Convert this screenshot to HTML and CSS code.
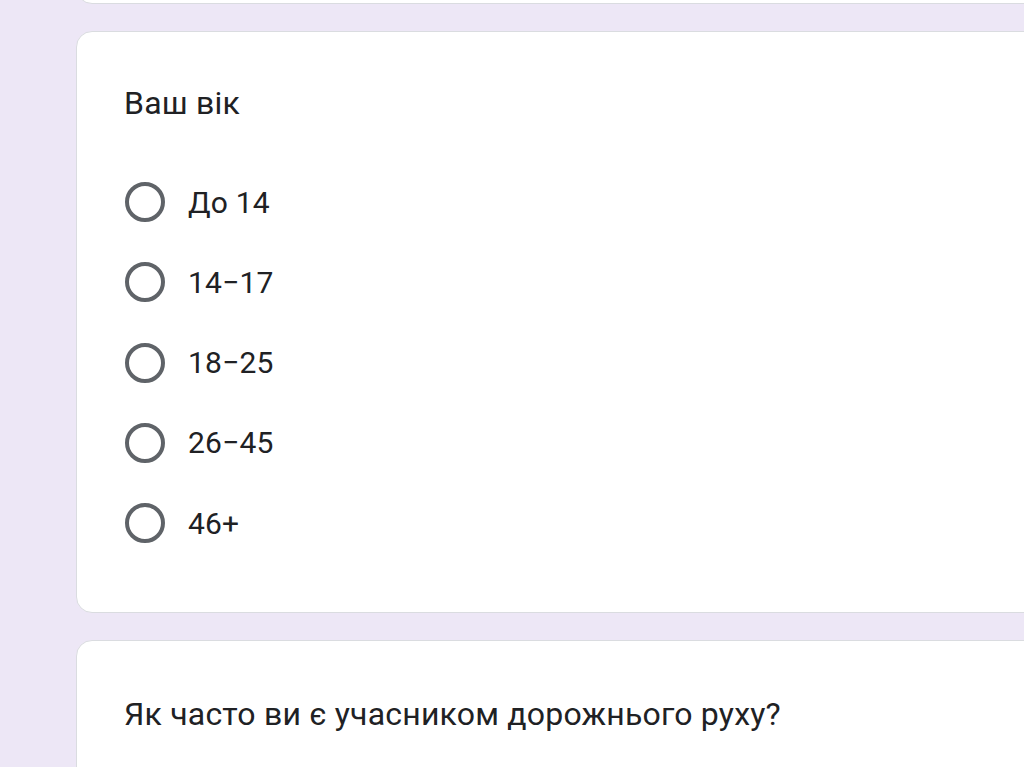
FILE: index.html
```html
<!DOCTYPE html>
<html lang="uk">
<head>
<meta charset="utf-8">
<link rel="stylesheet" href="styles.css">
</head>
<body>
<div class="page">
  <div class="card card-prev"></div>
  <div class="card">
    <div class="question">Ваш вік</div>
    <div class="options">
      <div class="option"><span class="radio"></span><span class="label">До 14</span></div>
      <div class="option"><span class="radio"></span><span class="label">14−17</span></div>
      <div class="option"><span class="radio"></span><span class="label">18−25</span></div>
      <div class="option"><span class="radio"></span><span class="label">26−45</span></div>
      <div class="option"><span class="radio"></span><span class="label">46+</span></div>
    </div>
  </div>
  <div class="card card-next">
    <div class="question">Як часто ви є учасником дорожнього руху?</div>
  </div>
</div>
</body>
</html>
```
FILE: styles.css
```css
html, body {
  margin: 0;
  padding: 0;
  height: 100%;
  overflow: hidden;
}
body {
  background: #ede7f6;
  font-family: Roboto, "Noto Sans", sans-serif;
  color: #202124;
}
.page {
  display: flex;
  flex-direction: column;
  gap: 27px;
  padding-left: 76px;
  margin-top: -96px;
}
.card {
  width: 1000px;
  background: #fff;
  border: 1px solid #dadce0;
  border-radius: 16px;
  padding: 47px 47px 49px;
  box-sizing: border-box;
}
.card-prev {
  height: 100px;
  padding: 0;
}
.card-next {
  height: 300px;
  padding-top: 49px;
}
.question {
  font-size: 32px;
  line-height: 48px;
  letter-spacing: 0.2px;
}
.options {
  display: flex;
  flex-direction: column;
  margin-top: 35px;
}
.option {
  display: flex;
  align-items: center;
  height: 80.25px;
  gap: 23px;
}
.radio {
  width: 40px;
  height: 40px;
  margin-left: 1px;
  box-sizing: border-box;
  border: 4px solid #5f6368;
  border-radius: 50%;
  flex: none;
}
.label {
  font-size: 30px;
  letter-spacing: 0.2px;
}
```
